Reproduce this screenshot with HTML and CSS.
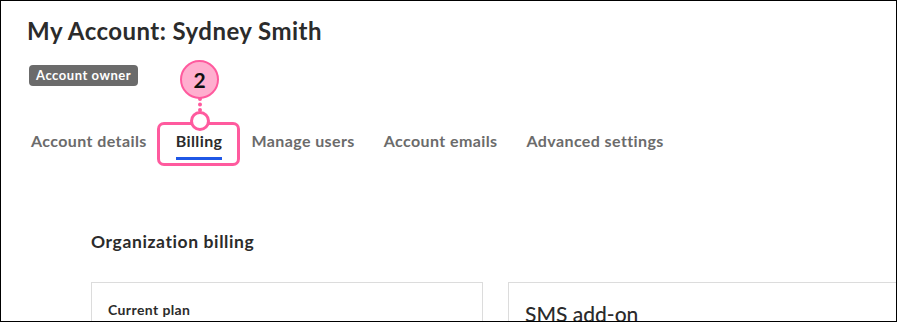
FILE: index.html
```html
<!DOCTYPE html>
<html lang="en">
<head>
  <meta charset="UTF-8" />
  <title>My Account</title>
  <link rel="stylesheet" href="styles.css">
</head>
<body>
  <div class="frame">
    <h1 class="page-title">My Account: Sydney Smith</h1>
    <span class="badge">Account owner</span>

    <nav class="tabs">
      <a href="#">Account details</a>
      <a href="#" class="active">Billing</a>
      <a href="#">Manage users</a>
      <a href="#">Account emails</a>
      <a href="#">Advanced settings</a>
    </nav>

    <div class="content">
      <h2 class="section-title">Organization billing</h2>
      <div class="cards">
        <div class="card card-plan">
          <div class="card-label">Current plan</div>
        </div>
        <div class="card card-sms">
          <div class="card-title">SMS add-on</div>
        </div>
      </div>
    </div>

    <!-- callout -->
    <div class="callout-box"></div>
    <div class="callout-dot"></div>
    <div class="callout-line"></div>
    <div class="callout-num">2</div>
  </div>
</body>
</html>
```

FILE: styles.css
```css
body {
  margin: 0;
  font-family: 'Lato', sans-serif;
  background: #fff;
}

.frame {
  position: relative;
  width: 897px;
  height: 322px;
  box-sizing: border-box;
  border: 1px solid #000;
  overflow: hidden;
  padding: 0 0 0 26px;
}

.page-title {
  margin: 15px 0 0 0;
  font-size: 24px;
  font-weight: 700;
  letter-spacing: 0.45px;
  color: #2b2b2b;
  line-height: 30px;
}

.badge {
  display: inline-block;
  margin: 19px 0 0 2px;
  background: #6b6b6b;
  color: #fff;
  font-size: 13px;
  font-weight: 700;
  letter-spacing: 0.55px;
  line-height: 21px;
  padding: 0 7px;
  border-radius: 4px;
}

.tabs {
  display: flex;
  gap: 29px;
  margin: 45px 0 0 4px;
}

.tabs a {
  color: #6b6b6b;
  text-decoration: none;
  font-size: 16px;
  font-weight: 700;
  letter-spacing: 0.4px;
  line-height: 20px;
  padding-bottom: 6px;
  border-bottom: 3px solid transparent;
}

.tabs a.active {
  color: #2b2b2b;
  border-bottom-color: #1f57e6;
}

.content {
  padding-left: 64px;
}

.section-title {
  margin: 70px 0 0 0;
  font-size: 17.5px;
  font-weight: 700;
  letter-spacing: 0.6px;
  color: #2b2b2b;
  line-height: 24px;
}

.cards {
  display: flex;
  gap: 25px;
  margin-top: 28px;
}

.card {
  border: 1px solid #dcdcdc;
  height: 80px;
  flex-shrink: 0;
}

.card-plan {
  width: 392px;
  box-sizing: border-box;
  padding: 18px 16px;
}

.card-sms {
  width: 420px;
  padding: 16px 16px;
}

.card-label {
  font-size: 14px;
  font-weight: 700;
  letter-spacing: 0.4px;
  color: #2b2b2b;
}

.card-title {
  font-size: 21px;
  font-weight: 500;
  color: #2b2b2b;
  margin-top: 2px;
}

.callout-box {
  position: absolute;
  left: 156px;
  top: 121px;
  width: 77px;
  height: 38px;
  border: 3px solid #ff5a9e;
  border-radius: 7px;
}

.callout-dot {
  position: absolute;
  left: 189px;
  top: 110px;
  width: 14px;
  height: 14px;
  background: #fff;
  border: 3px solid #ff5a9e;
  border-radius: 50%;
}

.callout-line {
  position: absolute;
  left: 197px;
  top: 96px;
  width: 0;
  height: 15px;
  border-left: 4px dotted #ff5a9e;
}

.callout-num {
  position: absolute;
  left: 179px;
  top: 59px;
  width: 35px;
  height: 35px;
  background: #ffafcf;
  border: 2px solid #ff5a9e;
  border-radius: 50%;
  color: #111;
  font-size: 21px;
  font-weight: 700;
  line-height: 35px;
  text-align: center;
}
```
